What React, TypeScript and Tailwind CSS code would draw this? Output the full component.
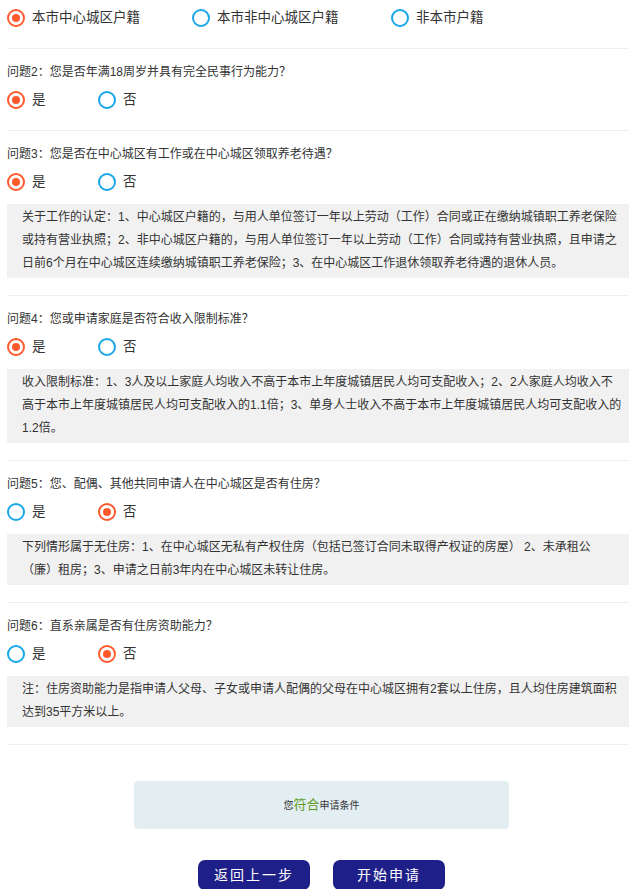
import React from "react";

type Opt = { label: string; w: string; checked?: boolean };

function Radio({ label, w, checked }: Opt) {
  return (
    <div className={`flex items-center ${w}`}>
      {checked ? (
        <span className="w-[18px] h-[18px] rounded-full border-2 border-[#fe5a2c] flex items-center justify-center shrink-0">
          <span className="w-[8px] h-[8px] rounded-full bg-[#fe5a2c]" />
        </span>
      ) : (
        <span className="w-[18px] h-[18px] rounded-full border-2 border-[#1ba6ea] shrink-0" />
      )}
      <span className="ml-[7px] text-[13.5px] text-[#333] whitespace-nowrap">{label}</span>
    </div>
  );
}

function Question({
  title,
  yes,
  note,
}: {
  title: string;
  yes: boolean;
  note?: string[];
}) {
  return (
    <div className="border-t border-[#eeeeee] pt-[14px] pb-[16px]">
      <div className="text-[12px] leading-[18px] text-[#333]">{title}</div>
      <div className="flex items-center h-[28px] mt-[5px]">
        <Radio label="是" w="w-[91px]" checked={yes} />
        <Radio label="否" w="w-[91px]" checked={!yes} />
      </div>
      {note && (
        <div className="mt-[8px] mb-[1px] bg-[#f1f1f1] pl-[15px] pt-[2px] pb-[3px] text-[12px] leading-[23px] text-[#333] overflow-hidden">
          {note.map((l, i) => (
            <div key={i} className="whitespace-nowrap">
              {l}
            </div>
          ))}
        </div>
      )}
    </div>
  );
}

export default function App() {
  return (
    <div
      className="w-[630px] h-[889px] overflow-hidden bg-white"
      style={{ fontFamily: '"Liberation Sans", "Noto Sans CJK SC", sans-serif' }}
    >
      <div className="pl-[7px] pr-[1px]">
        <div className="pt-[4px] pb-[16px]">
          <div className="flex items-center h-[28px]">
            <Radio label="本市中心城区户籍" w="w-[185px]" checked />
            <Radio label="本市非中心城区户籍" w="w-[199px]" />
            <Radio label="非本市户籍" w="w-[120px]" />
          </div>
        </div>
        <Question title="问题2：您是否年满18周岁并具有完全民事行为能力？" yes />
        <Question
          title="问题3：您是否在中心城区有工作或在中心城区领取养老待遇？"
          yes
          note={[
            "关于工作的认定：1、中心城区户籍的，与用人单位签订一年以上劳动（工作）合同或正在缴纳城镇职工养老保险",
            "或持有营业执照；2、非中心城区户籍的，与用人单位签订一年以上劳动（工作）合同或持有营业执照，且申请之",
            "日前6个月在中心城区连续缴纳城镇职工养老保险；3、在中心城区工作退休领取养老待遇的退休人员。",
          ]}
        />
        <Question
          title="问题4：您或申请家庭是否符合收入限制标准？"
          yes
          note={[
            "收入限制标准：1、3人及以上家庭人均收入不高于本市上年度城镇居民人均可支配收入；2、2人家庭人均收入不",
            "高于本市上年度城镇居民人均可支配收入的1.1倍；3、单身人士收入不高于本市上年度城镇居民人均可支配收入的",
            "1.2倍。",
          ]}
        />
        <Question
          title="问题5：您、配偶、其他共同申请人在中心城区是否有住房？"
          yes={false}
          note={[
            "下列情形属于无住房：1、在中心城区无私有产权住房（包括已签订合同未取得产权证的房屋） 2、未承租公",
            "（廉）租房；3、申请之日前3年内在中心城区未转让住房。",
          ]}
        />
        <Question
          title="问题6：直系亲属是否有住房资助能力？"
          yes={false}
          note={[
            "注：住房资助能力是指申请人父母、子女或申请人配偶的父母在中心城区拥有2套以上住房，且人均住房建筑面积",
            "达到35平方米以上。",
          ]}
        />
        <div className="border-t border-[#eeeeee]" />
      </div>

      <div className="flex justify-center pl-[13px] mt-[36px]">
        <div className="w-[375px] h-[48px] rounded-[4px] bg-[#e3eef3] flex items-center justify-center text-[#333]">
          <span className="text-[10px]">您</span>
          <span className="text-[13px] text-[#5f9c1c]">符合</span>
          <span className="text-[10px]">申请条件</span>
        </div>
      </div>

      <div className="flex justify-center pl-[13px] gap-[23px] mt-[31px]">
        <button className="w-[112px] h-[30px] rounded-[7px] bg-[#1f1f8a] text-white text-[14px] tracking-[2px]">
          返回上一步
        </button>
        <button className="w-[112px] h-[30px] rounded-[7px] bg-[#1f1f8a] text-white text-[14px] tracking-[2px]">
          开始申请
        </button>
      </div>
    </div>
  );
}
